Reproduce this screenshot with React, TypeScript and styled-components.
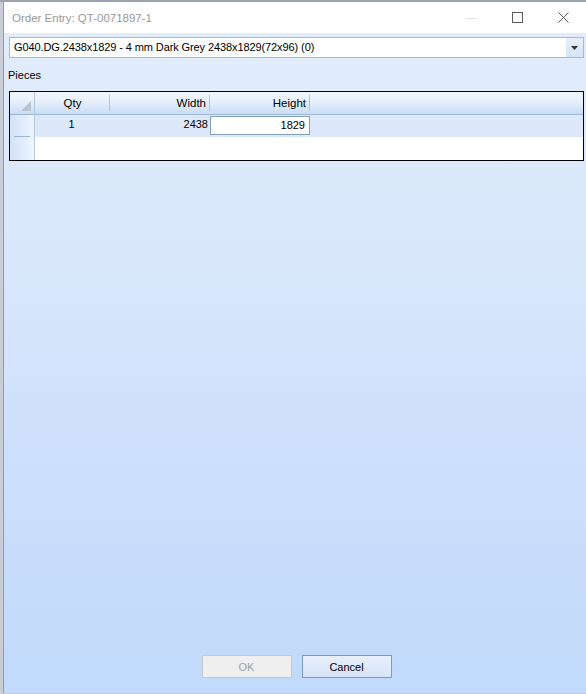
import React from 'react';
import styled, { createGlobalStyle } from 'styled-components';

const GlobalStyle = createGlobalStyle`
  html, body {
    margin: 0;
    padding: 0;
    background: #b9c0ca;
    font-family: "Liberation Sans", Arial, sans-serif;
  }
`;

const Desktop = styled.div`
  width: 586px;
  height: 694px;
  box-sizing: border-box;
  padding: 2px 0 1px 3px;
  background: linear-gradient(to bottom, #9aa3ae 0, #9aa3ae 2px, #c9ced6 2px);
  display: flex;
`;

const Window = styled.div`
  flex: 1;
  display: flex;
  flex-direction: column;
  border-left: 1px solid #8e9bab;
  background: linear-gradient(to bottom, #e3eefc 0%, #d5e5fb 45%, #c1d9fb 100%);
`;

const TitleBar = styled.div`
  height: 31px;
  display: flex;
  align-items: center;
  background: #ffffff;
  padding-left: 8px;
`;

const Title = styled.div`
  flex: 1;
  font-size: 11.5px;
  color: #9a9a9a;
`;

const Controls = styled.div`
  display: flex;
  height: 100%;
`;

const ControlButton = styled.div`
  width: 46px;
  height: 100%;
  display: flex;
  align-items: center;
  justify-content: center;
`;

const Body = styled.div`
  flex: 1;
  display: flex;
  flex-direction: column;
  padding: 4px 2px 15px 5px;
`;

const Combo = styled.div`
  height: 21px;
  box-sizing: border-box;
  display: flex;
  border: 1px solid #a5b9d2;
  background: #ffffff;
`;

const ComboText = styled.div`
  flex: 1;
  padding-left: 4px;
  font-size: 11px;
  letter-spacing: -0.1px;
  line-height: 19px;
  color: #000;
  white-space: nowrap;
`;

const ComboArrow = styled.div`
  width: 17px;
  display: flex;
  align-items: center;
  justify-content: center;
  background: linear-gradient(to bottom, #e6eef9, #d6e4f6);
`;

const Label = styled.div`
  margin: 11px 0 0 -1px;
  font-size: 11px;
  color: #000;
  height: 16px;
`;

const Grid = styled.div`
  margin-top: 6px;
  height: 70px;
  box-sizing: border-box;
  border: 1px solid #000;
  display: grid;
  grid-template-columns: 25px 75px 100px 100px 1fr;
  grid-template-rows: 23px 22px 1fr;
  background: #ffffff;
  font-size: 11px;
`;

const HeaderCell = styled.div<{ $align?: string }>`
  position: relative;
  display: flex;
  align-items: center;
  justify-content: ${p => p.$align || 'center'};
  padding-right: ${p => (p.$align === 'flex-end' ? '4px' : '0')};
  background: linear-gradient(to bottom, #f4f8fe 0%, #e4eefb 50%, #c8dcf5 100%);
  border-bottom: 1px solid #9fb6d5;
  font-size: 11.5px;
  color: #000;
`;

const HeaderSep = styled.span`
  position: absolute;
  right: 0;
  top: 3px;
  bottom: 3px;
  width: 1px;
  background: #b0c3dc;
`;

const Corner = styled(HeaderCell)`
  border-right: 1px solid #b0c3dc;
  align-items: flex-end;
  justify-content: flex-end;
  padding: 0 3px 3px 0;
`;

const Indicator = styled.div<{ $line?: boolean }>`
  background: linear-gradient(to right, #d3e3f8 0%, #e4eefc 70%, #f0f6fe 100%);
  border-right: 1px solid #b5c8e0;
  position: relative;
  ${p =>
    p.$line &&
    `&::after {
      content: '';
      position: absolute;
      left: 4px;
      right: 4px;
      bottom: 0;
      height: 1px;
      background: #9fb4cf;
    }`}
`;

const DataCell = styled.div<{ $align?: string }>`
  background: #dde9fb;
  display: flex;
  align-items: flex-start;
  justify-content: ${p => p.$align || 'center'};
  padding: 3px 2px 0 0;
  color: #000;
`;

const EditorCell = styled.div`
  background: #dde9fb;
  padding: 1px 0 2px 0;
  display: flex;
`;

const Editor = styled.div`
  flex: 1;
  box-sizing: border-box;
  border: 1px solid #7f9fbf;
  background: #ffffff;
  text-align: right;
  padding: 2px 4px 0 0;
  font-size: 11px;
`;

const Empty = styled.div`
  background: #ffffff;
`;

const Spacer = styled.div`
  flex: 1;
`;

const ButtonRow = styled.div`
  display: flex;
  justify-content: center;
  gap: 10px;
`;

const Button = styled.div<{ $disabled?: boolean }>`
  width: 90px;
  height: 23px;
  box-sizing: border-box;
  display: flex;
  align-items: center;
  justify-content: center;
  font-size: 11px;
  border: 1px solid ${p => (p.$disabled ? '#c8c8c8' : '#7a9cc8')};
  color: ${p => (p.$disabled ? '#a3a3a3' : '#000')};
  background: ${p =>
    p.$disabled ? '#efefef' : 'linear-gradient(to bottom, #e8f0fb, #d6e4f7)'};
`;

export default function App() {
  return (
    <>
      <GlobalStyle />
      <Desktop>
        <Window>
          <TitleBar>
            <Title>Order Entry: QT-0071897-1</Title>
            <Controls>
              <ControlButton>
                <svg width="10" height="10" viewBox="0 0 10 10">
                  <line x1="0" y1="5.5" x2="10" y2="5.5" stroke="#e2e2e2" strokeWidth="1" />
                </svg>
              </ControlButton>
              <ControlButton>
                <svg width="11" height="11" viewBox="0 0 11 11">
                  <rect x="0.5" y="0.5" width="10" height="10" fill="none" stroke="#5a5a5a" strokeWidth="1" />
                </svg>
              </ControlButton>
              <ControlButton>
                <svg width="11" height="11" viewBox="0 0 11 11">
                  <path d="M0.5 0.5 L10.5 10.5 M10.5 0.5 L0.5 10.5" stroke="#5a5a5a" strokeWidth="1" fill="none" />
                </svg>
              </ControlButton>
            </Controls>
          </TitleBar>
          <Body>
            <Combo>
              <ComboText>G040.DG.2438x1829 - 4 mm Dark Grey 2438x1829(72x96) (0)</ComboText>
              <ComboArrow>
                <svg width="7" height="4" viewBox="0 0 7 4">
                  <path d="M0 0 L7 0 L3.5 4 Z" fill="#333" />
                </svg>
              </ComboArrow>
            </Combo>
            <Label>Pieces</Label>
            <Grid>
              <Corner>
                <svg width="10" height="10" viewBox="0 0 10 10">
                  <path d="M10 0 L10 10 L0 10 Z" fill="#b9c4d2" />
                </svg>
              </Corner>
              <HeaderCell>Qty<HeaderSep /></HeaderCell>
              <HeaderCell $align="flex-end">Width<HeaderSep /></HeaderCell>
              <HeaderCell $align="flex-end">Height<HeaderSep /></HeaderCell>
              <HeaderCell />

              <Indicator $line />
              <DataCell>1</DataCell>
              <DataCell $align="flex-end">2438</DataCell>
              <EditorCell>
                <Editor>1829</Editor>
              </EditorCell>
              <DataCell />

              <Indicator />
              <Empty />
              <Empty />
              <Empty />
              <Empty />
            </Grid>
            <Spacer />
            <ButtonRow>
              <Button $disabled>OK</Button>
              <Button>Cancel</Button>
            </ButtonRow>
          </Body>
        </Window>
      </Desktop>
    </>
  );
}
